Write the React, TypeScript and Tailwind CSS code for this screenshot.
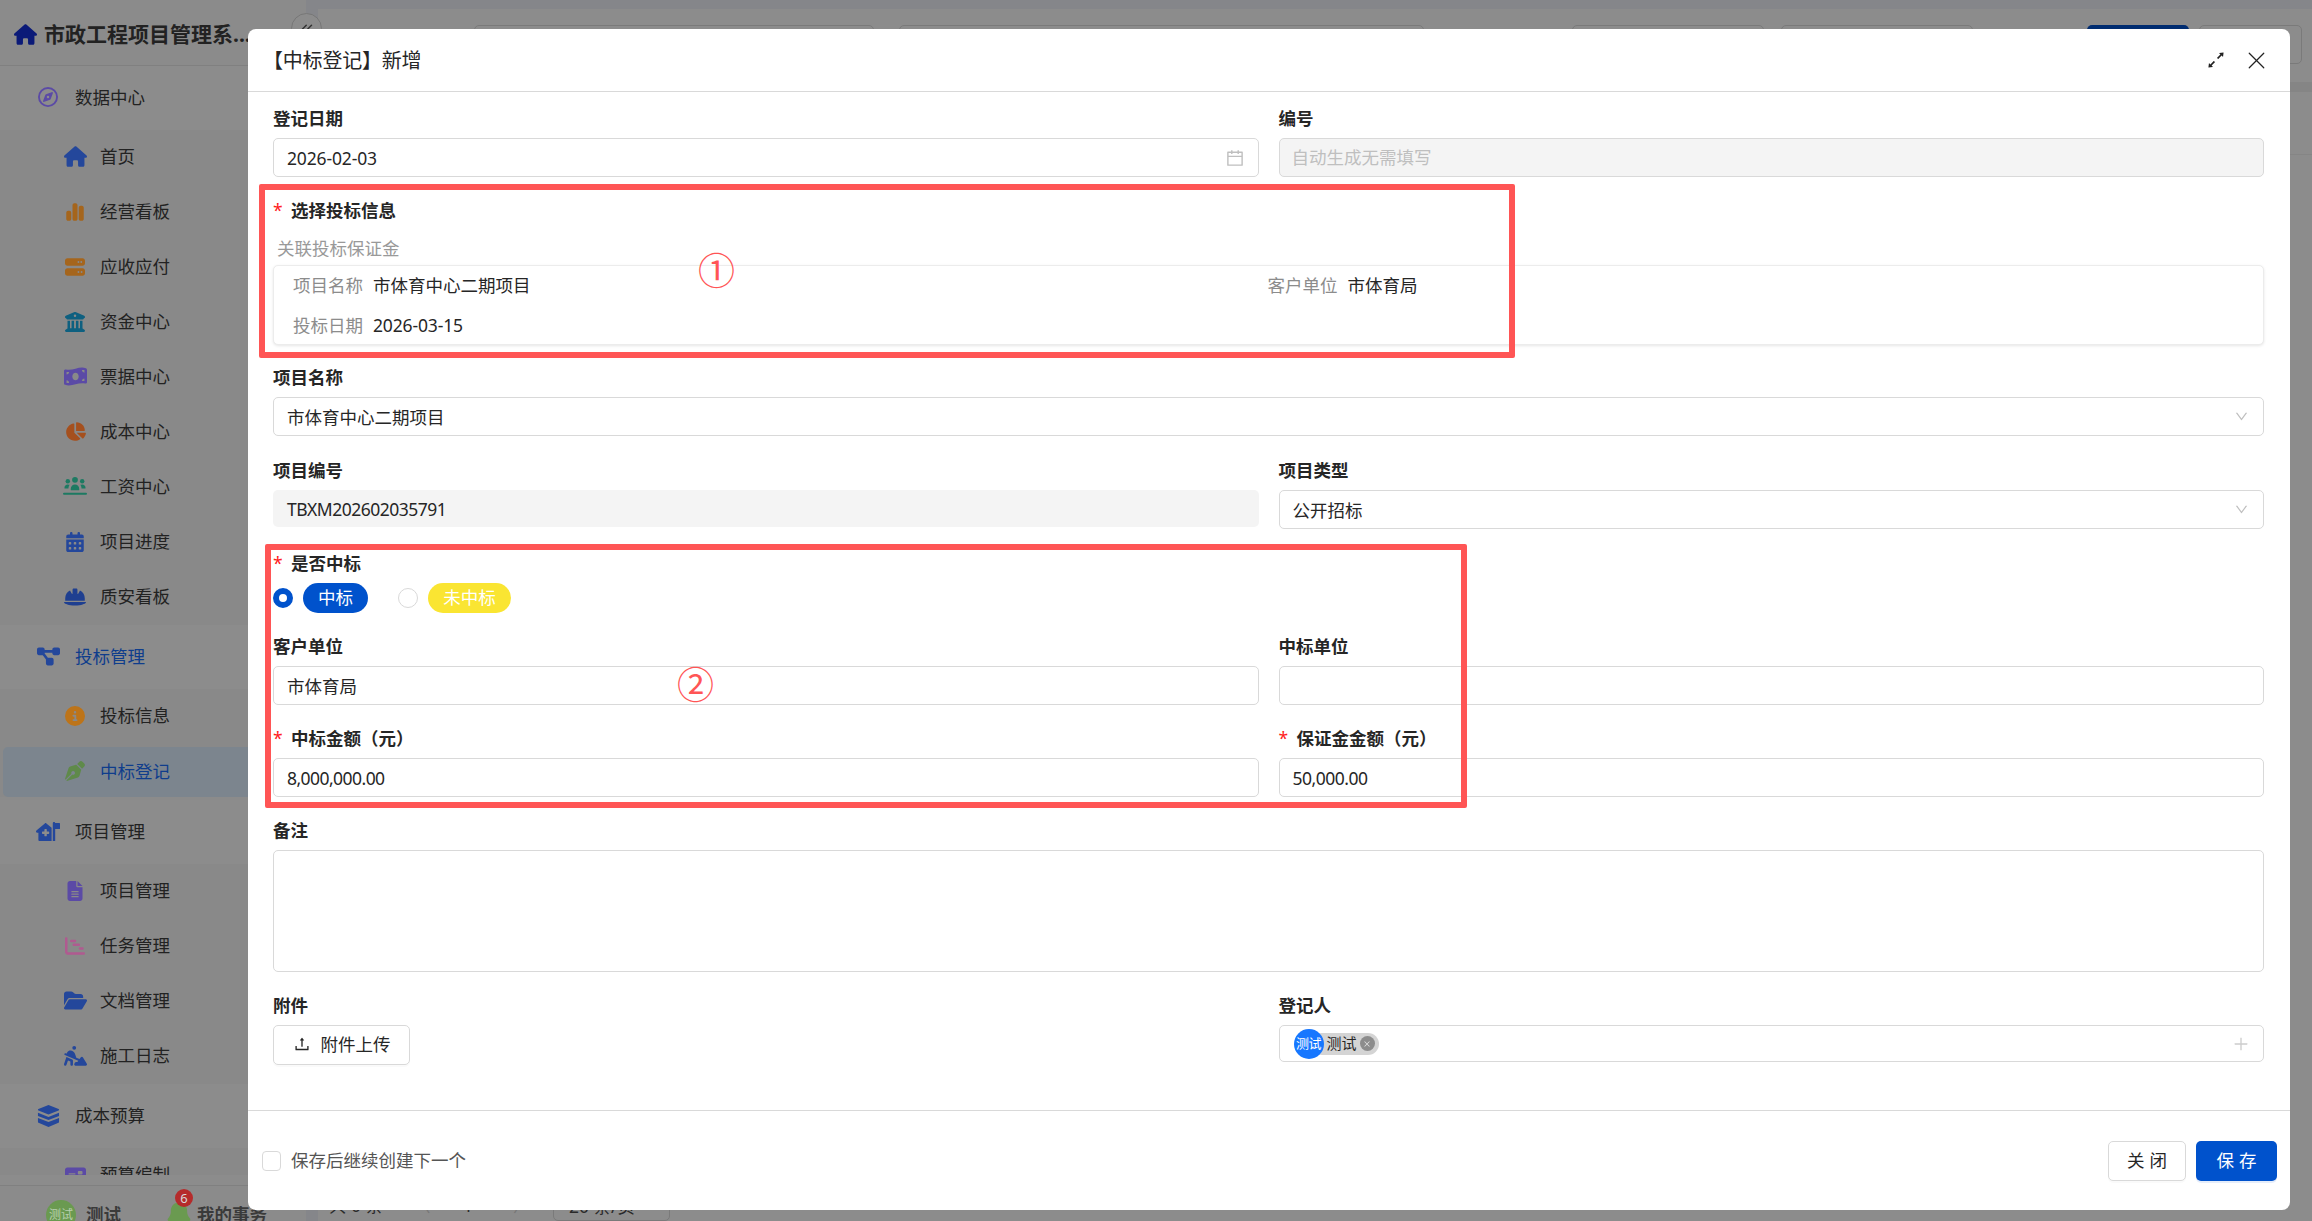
import React from 'react';
import {
  FaHouse, FaRegCompass, FaChartSimple, FaServer, FaBuildingColumns, FaMoneyBillWave, FaChartPie,
  FaCalendarDays, FaHelmetSafety, FaDiagramProject, FaCircleInfo, FaPenNib,
  FaHouseMedicalFlag, FaFileLines, FaChartGantt, FaFolderOpen, FaPersonDigging, FaMoneyCheck, FaBell,
} from 'react-icons/fa6';
import {
  AiOutlineCalendar, AiOutlineDown, AiOutlineUpload, AiOutlinePlus, AiOutlineClose, AiOutlineArrowsAlt,
} from 'react-icons/ai';
import { ChevronsLeft, X } from 'lucide-react';

type IconProps = { size?: number; color?: string };
type NavItem = { label: string; icon: React.ElementType<IconProps>; color: string; size: number; active?: boolean };
type NavGroup = NavItem & { items: NavItem[]; open?: boolean };

// three heads over a ground line
function TeamIcon({ size = 25, color }: IconProps) {
  return (
    <svg width={size} height={size} viewBox="0 0 25 20" fill={color}>
      <circle cx="12.5" cy="3" r="3" />
      <circle cx="5" cy="4.5" r="2.3" />
      <circle cx="20" cy="4.5" r="2.3" />
      <path d="M8 13c0-3.2 2-5 4.500-5s4.500 1.800 4.500 5c0 .6-.4 1-1 1H9c-.6 0-1-.4-1-1z" />
      <path d="M1.500 11.500C1.500 9 3 7.800 5 7.800c.8 0 1.500.2 2 .5-.8 1-1.300 2.300-1.300 3.900H2.200c-.4 0-.7-.3-.7-.7z" />
      <path d="M23.500 11.500c0-2.500-1.500-3.700-3.500-3.700-.8 0-1.500.2-2 .5.800 1 1.300 2.300 1.300 3.900h3.500c.4 0 .7-.3.7-.7z" />
      <rect x="0" y="16.500" width="25" height="2.200" rx="1.100" />
    </svg>
  );
}

// stacked box: lid, band and body with dashes
function BudgetIcon({ size = 23, color }: IconProps) {
  return (
    <svg width={size} height={size} viewBox="0 0 24 24" fill={color}>
      <path d="M12 1l10.500 4.200c.7.3.7 1.300 0 1.600L12 11 1.500 6.800c-.7-.3-.7-1.300 0-1.600z" />
      <path d="M1 9.200l11 4.400 11-4.400v3.200l-11 4.400L1 12.400z" />
      <path d="M1 14.500l11 4.400 11-4.400v4.200c0 .4-.2.700-.6.900L12 24 1.600 19.600c-.4-.2-.6-.5-.6-.9z" />
    </svg>
  );
}

const NAV: NavGroup[] = [
  {
    label: '数据中心', icon: FaRegCompass, color: '#5b4aa6', size: 20,
    items: [
      { label: '首页', icon: FaHouse, color: '#24479b', size: 23 },
      { label: '经营看板', icon: FaChartSimple, color: '#a5651c', size: 20 },
      { label: '应收应付', icon: FaServer, color: '#a5651c', size: 20 },
      { label: '资金中心', icon: FaBuildingColumns, color: '#0e6080', size: 20 },
      { label: '票据中心', icon: FaMoneyBillWave, color: '#5b4aa6', size: 23 },
      { label: '成本中心', icon: FaChartPie, color: '#a5501e', size: 21 },
      { label: '工资中心', icon: TeamIcon, color: '#1d7a62', size: 25 },
      { label: '项目进度', icon: FaCalendarDays, color: '#24479b', size: 20 },
      { label: '质安看板', icon: FaHelmetSafety, color: '#1f3f90', size: 22 },
    ],
  },
  {
    label: '投标管理', icon: FaDiagramProject, color: '#24479b', size: 23, open: true,
    items: [
      { label: '投标信息', icon: FaCircleInfo, color: '#bd7419', size: 20 },
      { label: '中标登记', icon: FaPenNib, color: '#5f8a4a', size: 20, active: true },
    ],
  },
  {
    label: '项目管理', icon: FaHouseMedicalFlag, color: '#24479b', size: 25,
    items: [
      { label: '项目管理', icon: FaFileLines, color: '#5b4aa6', size: 20 },
      { label: '任务管理', icon: FaChartGantt, color: '#b05a90', size: 20 },
      { label: '文档管理', icon: FaFolderOpen, color: '#24479b', size: 23 },
      { label: '施工日志', icon: FaPersonDigging, color: '#24479b', size: 23 },
    ],
  },
  {
    label: '成本预算', icon: BudgetIcon, color: '#24479b', size: 23,
    items: [{ label: '预算编制', icon: FaMoneyCheck, color: '#5b4aa6', size: 21 }],
  },
];

function Sidebar() {
  return (
    <aside className="w-[306px] h-full shrink-0 flex flex-col bg-[#8b8b8b] text-[17.5px] text-[#222222]">
      <div className="h-[66px] shrink-0 flex items-center pt-[4px] pl-[14px] gap-[7px] border-b border-[#808080]">
        <FaHouse size={23} color="#0b1a78" />
        <span className="whitespace-nowrap text-[21px] font-bold">市政工程项目管理系...</span>
      </div>
      <nav className="flex-1 min-h-0 overflow-hidden">
        {NAV.map(group => (
          <div key={group.label + group.size}>
            <div className={`h-[64px] pb-[2px] flex items-center pl-[36px] gap-[15px] bg-[#8c8c8c] ${group.open ? 'text-[#0f3d8c]' : ''}`}>
              <span className="w-[24px] flex justify-center">
                <group.icon size={group.size} color={group.color} />
              </span>
              {group.label}
            </div>
            <div className="bg-[#898989]">
              {group.items.map(item => (
                <div
                  key={item.label}
                  className={
                    item.active
                      ? 'h-[50px] mt-[2.5px] mb-[3.5px] ml-[3px] pl-[60px] pb-[1px] flex items-center gap-[13px] rounded-[5px] bg-[#7c858e] text-[#0f3d8c]'
                      : 'h-[55px] pl-[63px] pb-[2px] flex items-center gap-[13px]'
                  }
                >
                  <span className="w-[24px] flex justify-center">
                    <item.icon size={item.size} color={item.color} />
                  </span>
                  {item.label}
                </div>
              ))}
            </div>
          </div>
        ))}
      </nav>
      <div className="h-[10px] shrink-0 bg-[#8c8c8c]" />
      <div className="h-[36px] shrink-0 flex border-t border-[#808080] bg-[#8b8b8b] pt-[14px] pl-[46px] font-bold text-[#3a3a3a]">
        <div className="w-[30px] h-[30px] shrink-0 rounded-full bg-[#6a9a50] text-[12px] font-normal text-[#b9cfae] flex items-center justify-center">
          测试
        </div>
        <span className="ml-[10px] leading-[28px] whitespace-nowrap">测试</span>
        <div className="relative ml-[45px] shrink-0">
          <FaBell size={26} color="#6a9a50" />
          <span className="absolute -top-[11px] left-[9px] w-[18px] h-[18px] rounded-full bg-[#b52b2b] text-[13px] font-normal text-[#d8d8d8] leading-[18px] text-center">
            6
          </span>
        </div>
        <span className="ml-[5px] leading-[28px] whitespace-nowrap">我的事务</span>
      </div>
    </aside>
  );
}

function BackgroundPage() {
  return (
    <main className="flex-1 h-full flex flex-col bg-[#85868a] pt-[9px] pl-[12px] text-[17.5px] text-[#222222]">
      <div className="flex-1 min-h-0 flex flex-col bg-[#8c8c8c]">
        <div className="h-[73px] shrink-0 flex pt-[16px]">
          <div className="h-[39px] w-[400px] ml-[156px] rounded-[5px] border border-[#7a7a7a]" />
          <div className="h-[39px] w-[525px] ml-[25px] rounded-[5px] border border-[#7a7a7a]" />
          <div className="h-[39px] w-[192px] ml-[148px] rounded-[5px] border border-[#7a7a7a]" />
          <div className="h-[39px] w-[192px] ml-[17px] rounded-[5px] border border-[#7a7a7a]" />
          <div className="h-[39px] w-[102px] ml-[114px] rounded-[5px] bg-[#002c70]" />
          <div className="h-[39px] w-[103px] ml-[10px] rounded-[5px] border border-[#7a7a7a]" />
        </div>
        <div className="h-[10px] shrink-0 bg-[#858585]" />
        <div className="h-[63px] shrink-0 border-b border-[#858585]" />
        <div className="flex-1 min-h-0" />
        <div className="h-[36px] shrink-0 flex items-start pt-[8px] leading-[24px] text-[#2a2a2a]">
          <span className="ml-[11px] w-[84px] whitespace-nowrap">共 0 条</span>
          <span className="w-[50px] text-[#777777]">〈</span>
          <span className="w-[50px]">1</span>
          <span className="w-[40px] text-[#777777]">〉</span>
          <div className="w-[117px] h-[40px] -mt-[12px] pt-[12px] pl-[15px] border border-[#7a7a7a] rounded-[5px] whitespace-nowrap">
            20 条/页
          </div>
        </div>
      </div>
    </main>
  );
}

function Label({ text, required, className = '' }: { text: string; required?: boolean; className?: string }) {
  return (
    <div className={`h-[24px] mb-[7px] pb-[2px] flex items-center font-bold leading-[22px] text-[#262626] ${className}`}>
      {required && <span className="w-[18px] text-[#ff2020] font-normal">*</span>}
      {text}
    </div>
  );
}

function TextBox({ value, right, valueClass = '' }: { value: string; right?: React.ReactNode; valueClass?: string }) {
  return (
    <div className="h-[39px] pl-[13px] pr-[12px] flex items-center justify-between rounded-[5px] border border-[#d9d9d9] bg-white text-[#262626]">
      <span className={`pt-[1px] ${valueClass}`}>{value}</span>
      {right}
    </div>
  );
}

function Modal() {
  const arrow = <AiOutlineDown size={15} color="#bfbfbf" className="mr-[2px]" />;
  return (
    <section className="absolute left-[248px] top-[29px] w-[2042px] h-[1181px] flex flex-col rounded-[8px] bg-white text-[17.5px] text-[#262626]">
      <header className="h-[63px] shrink-0 flex items-center justify-between pl-[15px] pr-[19px] border-b border-[#d9d9d9]">
        <span className="pt-[2px] text-[20px] tracking-[-0.2px] text-[#262626]">【中标登记】新增</span>
        <div className="flex items-center gap-[15px]">
          <AiOutlineArrowsAlt size={22} color="#222222" />
          <X size={29} color="#222222" strokeWidth={1} />
        </div>
      </header>

      <div className="flex-1 min-h-0 pl-[25px] pr-[26px] pt-[15px]">
        <div className="grid grid-cols-2 gap-x-[20px] mb-[22px]">
          <div>
            <Label text="登记日期" />
            <TextBox
              value="2026-02-03"
              valueClass="tracking-[-0.15px]"
              right={<AiOutlineCalendar size={20} color="#bfbfbf" className="mr-[1px]" />}
            />
          </div>
          <div>
            <Label text="编号" />
            <div className="h-[39px] px-[12px] flex items-center rounded-[5px] border border-[#d9d9d9] bg-[#f4f4f4] text-[#bfbfbf]">
              自动生成无需填写
            </div>
          </div>
        </div>

        <div className="mb-[21px]">
          <Label required text="选择投标信息" className="mb-[13px]" />
          <div className="h-[29px] pl-[4px] leading-[24px] text-[#999999]">关联投标保证金</div>
          <div className="h-[80px] grid grid-cols-2 pl-[19px] pr-[21px] rounded-[5px] border border-[#ececec] bg-white shadow-[0_1px_3px_rgba(0,0,0,0.1)]">
            <div className="h-[40px] pb-[2px] flex items-center gap-[10px]">
              <span className="text-[#8c8c8c]">项目名称</span>市体育中心二期项目
            </div>
            <div className="h-[40px] pb-[2px] flex items-center gap-[10px]">
              <span className="text-[#8c8c8c]">客户单位</span>市体育局
            </div>
            <div className="h-[40px] pb-[2px] flex items-center gap-[10px]">
              <span className="text-[#8c8c8c]">投标日期</span>
              <span className="tracking-[-0.15px]">2026-03-15</span>
            </div>
          </div>
        </div>

        <div className="mb-[23px]">
          <Label text="项目名称" />
          <TextBox value="市体育中心二期项目" right={arrow} />
        </div>

        <div className="grid grid-cols-2 gap-x-[20px] mb-[23px]">
          <div>
            <Label text="项目编号" />
            <div className="h-[37px] px-[14px] pt-[1px] flex items-center rounded-[5px] bg-[#f4f4f4]">
              <span className="tracking-[-0.5px]">TBXM202602035791</span>
            </div>
          </div>
          <div>
            <Label text="项目类型" />
            <TextBox value="公开招标" right={arrow} />
          </div>
        </div>

        <div className="mb-[22px]">
          <Label required text="是否中标" className="mb-[6px]" />
          <div className="h-[30px] flex items-center">
            <span className="w-[20px] h-[20px] rounded-full border-[6.5px] border-[#0052cc] bg-white" />
            <span className="ml-[10px] w-[65px] h-[30px] pb-[1px] rounded-full bg-[#0052cc] text-white flex items-center justify-center">
              中标
            </span>
            <span className="ml-[30px] w-[20px] h-[20px] rounded-full border border-[#d9d9d9] bg-white" />
            <span className="ml-[10px] w-[83px] h-[30px] pb-[1px] rounded-full bg-[#fae532] text-white flex items-center justify-center">
              未中标
            </span>
          </div>
        </div>

        <div className="grid grid-cols-2 gap-x-[20px] mb-[22px]">
          <div>
            <Label text="客户单位" />
            <TextBox value="市体育局" />
          </div>
          <div>
            <Label text="中标单位" />
            <TextBox value="" />
          </div>
        </div>

        <div className="grid grid-cols-2 gap-x-[20px] mb-[22px]">
          <div>
            <Label required text="中标金额（元）" />
            <TextBox value="8,000,000.00" valueClass="tracking-[-0.55px]" />
          </div>
          <div>
            <Label required text="保证金金额（元）" />
            <TextBox value="50,000.00" valueClass="tracking-[-0.5px]" />
          </div>
        </div>

        <div className="mb-[22px]">
          <Label text="备注" />
          <div className="h-[122px] rounded-[5px] border border-[#d9d9d9] bg-white" />
        </div>

        <div className="grid grid-cols-2 gap-x-[20px]">
          <div>
            <Label text="附件" className="mb-[6px]" />
            <div className="w-[137px] h-[40px] pb-[2px] flex items-center justify-center gap-[10px] rounded-[5px] border border-[#d9d9d9] shadow-[0_2px_0_rgba(0,0,0,0.02)]">
              <AiOutlineUpload size={18} color="#262626" />
              附件上传
            </div>
          </div>
          <div>
            <Label text="登记人" className="mb-[6px]" />
            <div className="h-[37px] pl-[14px] pr-[13px] flex items-center justify-between rounded-[5px] border border-[#d9d9d9]">
              <div className="flex items-center">
                <span className="relative z-10 w-[30px] h-[30px] rounded-full bg-[#1677ff] text-white flex items-center justify-center whitespace-nowrap">
                  <span className="text-[13px] tracking-[-0.5px]">测试</span>
                </span>
                <span className="-ml-[13px] pl-[16px] pr-[4px] h-[22px] flex items-center gap-[3px] rounded-full bg-[#d4d4d4] text-[15px]">
                  测试
                  <span className="w-[15px] h-[15px] rounded-full bg-[#8c8c8c] flex items-center justify-center">
                    <AiOutlineClose size={8} color="#e8e8e8" />
                  </span>
                </span>
              </div>
              <AiOutlinePlus size={18} color="#cccccc" />
            </div>
          </div>
        </div>
      </div>

      <footer className="h-[100px] shrink-0 flex items-center justify-between pl-[14px] pr-[13px] border-t border-[#d9d9d9]">
        <div className="flex items-center gap-[10px] text-[#555555]">
          <span className="w-[19px] h-[20px] rounded-[4px] border border-[#d9d9d9] bg-white" />
          保存后继续创建下一个
        </div>
        <div className="flex items-center gap-[10px]">
          <button className="w-[78px] h-[40px] rounded-[5px] border border-[#d9d9d9] bg-white tracking-[5px] pl-[5px] shadow-[0_2px_0_rgba(0,0,0,0.02)]">
            关闭
          </button>
          <button className="w-[81px] h-[40px] rounded-[5px] bg-[#0052cc] text-white tracking-[5px] pl-[5px] shadow-[0_2px_0_rgba(0,82,204,0.1)]">
            保存
          </button>
        </div>
      </footer>

      {/* red annotations drawn over the form */}
      <div className="absolute left-[11px] top-[155px] w-[1256px] h-[174px] rounded-[2px] border-[6px] border-[#ff5555] pointer-events-none" />
      <div className="absolute left-[17px] top-[515px] w-[1202px] h-[264px] rounded-[2px] border-[6px] border-[#ff5555] pointer-events-none" />
      <span className="absolute left-[450px] top-[218px] w-[36px] h-[48px] leading-[48px] text-center text-[37px] text-[#ff5555]">①</span>
      <span className="absolute left-[429px] top-[632px] w-[36px] h-[48px] leading-[48px] text-center text-[37px] text-[#ff5555]">②</span>
    </section>
  );
}

export default function App() {
  return (
    <div className="relative w-[2312px] h-[1221px] flex overflow-hidden bg-[#8c8c8c] font-['Noto_Sans','Noto_Sans_CJK_SC',sans-serif]">
      <Sidebar />
      <BackgroundPage />
      <div className="absolute left-[291px] top-[13px] w-[31px] h-[31px] rounded-full border border-[#777777] bg-[#8c8c8c] flex items-center justify-center">
        <ChevronsLeft size={18} color="#333333" />
      </div>
      <Modal />
    </div>
  );
}
